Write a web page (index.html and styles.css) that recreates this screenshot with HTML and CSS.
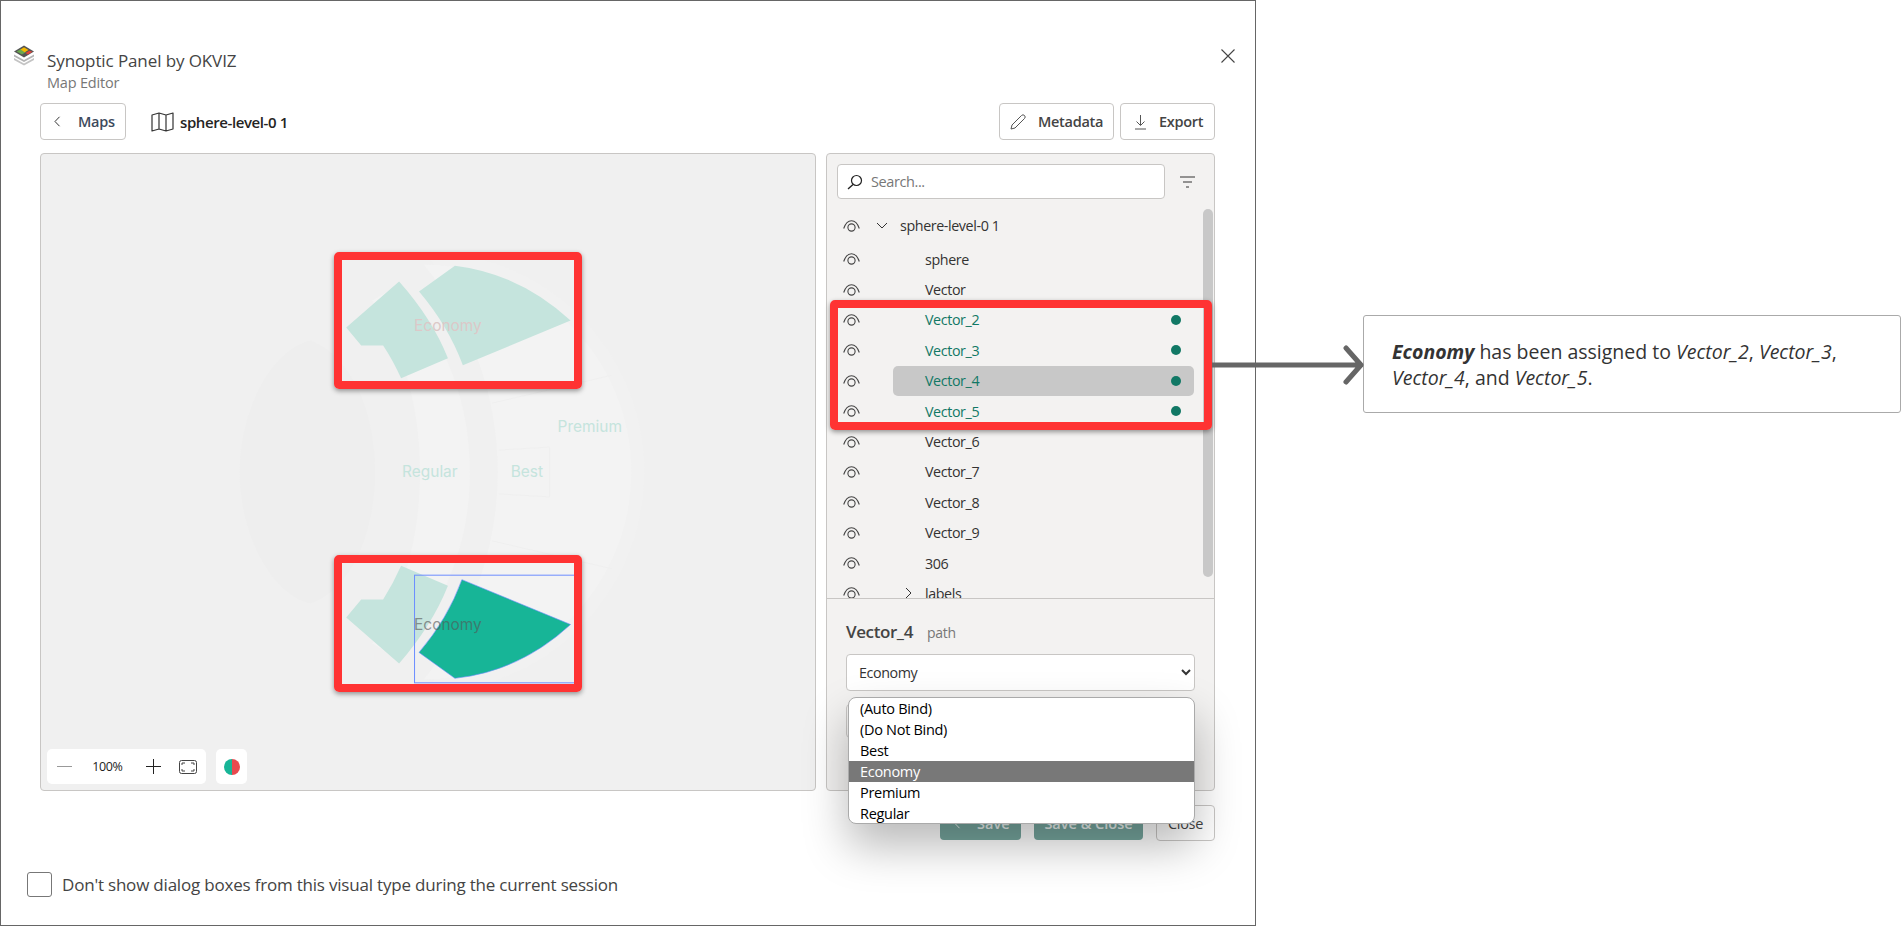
FILE: index.html
```html
<!DOCTYPE html>
<html lang="en">
<head>
<meta charset="utf-8">
<title>Synoptic Panel by OKVIZ</title>
<link rel="stylesheet" href="styles.css">
</head>
<body>
<svg class="defs" width="0" height="0">
	<symbol id="eye" viewBox="0 0 17 12">
		<path d="M.7 8.500C2.600 3 5.300.8 8.500.8s5.900 2.200 7.800 7.700" fill="none" stroke="#444" stroke-width="1.100"/>
		<circle cx="8.500" cy="7.500" r="3.600" fill="none" stroke="#444" stroke-width="1.100"/>
	</symbol>
</svg>

<div class="dialog">
	<header class="head">
		<svg class="logo" width="22" height="22" viewBox="0 0 22 22">
			<path d="M1 13l10 5.500L21 13v2l-10 5.500L1 15z" fill="#c4c4c4"/>
			<path d="M1 9.500l10 5.500 10-5.500v2L11 17 1 11.500z" fill="#b4b4b4"/>
			<path d="M11 .5l10 6-10 6-10-6z" fill="#555"/>
			<path d="M11 2l3 2-3 2-3-2z" fill="#4a4a4a"/>
			<path d="M3.500 6.500L8 4l5 3-4 2.500z" fill="#6aa84f"/>
			<path d="M7.500 4.500L11 2.300l4.500 2.700-3.800 2.300z" fill="#f5b800"/>
			<path d="M12.500 8l3.700-2.300 3.300 1L15 9.500z" fill="#e0433b"/>
		</svg>
		<div class="head-text">
			<div class="title">Synoptic Panel by OKVIZ</div>
			<div class="subtitle">Map Editor</div>
		</div>
		<svg class="close-x" width="14" height="14" viewBox="0 0 14 14"><path d="M.5.5l13 13M13.500.5l-13 13" stroke="#444" stroke-width="1.100"/></svg>
	</header>

	<div class="content">
		<div class="toolbar">
			<button class="btn btn-maps" type="button">
				<svg width="7" height="11" viewBox="0 0 7 11"><path d="M5.500.8L1 5.500l4.500 4.700" fill="none" stroke="#333" stroke-width="1"/></svg>
				<span>Maps</span>
			</button>
			<div class="map-name">
				<svg width="23" height="20" viewBox="0 0 23 20"><path d="M1 3l7-2 7 2 7-2v16l-7 2-7-2-7 2zM8 1v16M15 3v16" fill="none" stroke="#333" stroke-width="1.200" stroke-linejoin="round"/></svg>
				<span>sphere-level-0 1</span>
			</div>
			<div class="spacer"></div>
			<button class="btn btn-meta" type="button">
				<svg width="16" height="16" viewBox="0 0 16 16"><path d="M1 15l1-4L11.500 1.500a1.800 1.800 0 0 1 3 3L5 14z" fill="none" stroke="#555" stroke-width="1"/></svg>
				<span>Metadata</span>
			</button>
			<button class="btn btn-export" type="button">
				<svg width="13" height="16" viewBox="0 0 13 16"><path d="M6.500 1v10M2.500 7.500l4 4 4-4M1 15h11" fill="none" stroke="#555" stroke-width="1"/></svg>
				<span>Export</span>
			</button>
		</div>

		<div class="main">
			<div class="canvas">
				<svg class="drawing" viewBox="40 153 776 638" width="774" height="636">
					<path d="M424 251A221 221 0 0 1 424 693A330 330 0 0 0 498 472A330 330 0 0 0 424 251z" fill="#f1f1f1"/>
					<path d="M310 340C270 350 239 410 239 472S270 595 310 604C350 590 375 535 375 472S350 355 310 340z" fill="#eeeeee"/>
					<path d="M372 300C405 350 420 410 420 472S405 594 372 644L400 660C448 600 470 540 470 472S448 344 400 284z" fill="#f3f3f3"/>
					<path d="M424 264A208 208 0 0 1 424 680A330 330 0 0 0 498 472A330 330 0 0 0 424 264z" fill="#f3f3f3"/>
					<path d="M492 403L612 375M492 541L612 569M499 450L550 447L550 497L499 494" fill="none" stroke="#efefef" stroke-width="1"/>
					<path d="M346 327L399 281Q432 318 448 358L401 378Q393 360 383 345H361z" fill="#c5e4dd"/>
					<path d="M419 291L455 265Q520 273 571 320L463 365Q448 325 419 291z" fill="#c5e4dd"/>
					<path d="M346 618L399 664Q432 626 448 586L401 566Q393 584 383 600H361z" fill="#c5e4dd"/>
					<path d="M462 580L571 625Q520 672 455 679L419 653Q448 619 462 580z" fill="#17b597" stroke="#6b8cff" stroke-width=".6"/>
					<rect x="414.500" y="575.500" width="162" height="108" fill="none" stroke="#6b8cff" stroke-width="1"/>
					<text class="lbl lbl-soft" x="402" y="477">Regular</text>
					<text class="lbl lbl-soft" x="511" y="477">Best</text>
					<text class="lbl lbl-soft" x="558" y="432">Premium</text>
					<text class="lbl lbl-red" x="414" y="331">Economy</text>
					<text class="lbl lbl-dark" x="414" y="631">Economy</text>
				</svg>
				<div class="map-tools">
					<div class="zoom-box">
						<svg width="15" height="1" viewBox="0 0 15 1"><path d="M0 .5h15" stroke="#999"/></svg>
						<span class="pct">100%</span>
						<svg class="plus" width="15" height="15" viewBox="0 0 15 15"><path d="M0 7.500h15M7.500 0v15" stroke="#222"/></svg>
						<svg width="18" height="14" viewBox="0 0 18 14"><rect x=".5" y=".5" width="17" height="13" rx="2" fill="none" stroke="#444"/><path d="M3 5V3h3M12 3h3v2M15 9v2h-3M6 11H3V9" fill="none" stroke="#444"/></svg>
					</div>
					<div class="colour-box">
						<svg width="16" height="16" viewBox="0 0 16 16"><path d="M8 0a8 8 0 0 0 0 16z" fill="#17b597"/><path d="M8 0a8 8 0 0 1 0 16z" fill="#e8494f"/></svg>
					</div>
				</div>
			</div>

			<div class="panel">
				<div class="search-row">
					<label class="search">
						<svg width="16" height="16" viewBox="0 0 16 16"><circle cx="9.500" cy="6.500" r="5" fill="none" stroke="#222" stroke-width="1.200"/><path d="M6 10.500L1 15" stroke="#222" stroke-width="1.400"/></svg>
						<input type="text" placeholder="Search...">
					</label>
					<svg class="filter" width="15" height="12" viewBox="0 0 15 12"><path d="M0 1h15M3 6h9M6 11h3" stroke="#333" stroke-width="1"/></svg>
				</div>
				<div class="tree">
					<div class="row row-root"><svg class="eye"><use href="#eye"/></svg><svg class="twist" width="12" height="7" viewBox="0 0 12 7"><path d="M1 1l5 5 5-5" fill="none" stroke="#333"/></svg><span class="name">sphere-level-0 1</span></div>
					<div class="row"><svg class="eye"><use href="#eye"/></svg><span class="name name-in">sphere</span></div>
					<div class="row"><svg class="eye"><use href="#eye"/></svg><span class="name name-in">Vector</span></div>
					<div class="row bound"><svg class="eye"><use href="#eye"/></svg><span class="name name-in">Vector_2</span><i class="dot"></i></div>
					<div class="row bound"><svg class="eye"><use href="#eye"/></svg><span class="name name-in">Vector_3</span><i class="dot"></i></div>
					<div class="row bound selected"><svg class="eye"><use href="#eye"/></svg><span class="name name-in">Vector_4</span><i class="dot"></i></div>
					<div class="row bound"><svg class="eye"><use href="#eye"/></svg><span class="name name-in">Vector_5</span><i class="dot"></i></div>
					<div class="row"><svg class="eye"><use href="#eye"/></svg><span class="name name-in">Vector_6</span></div>
					<div class="row"><svg class="eye"><use href="#eye"/></svg><span class="name name-in">Vector_7</span></div>
					<div class="row"><svg class="eye"><use href="#eye"/></svg><span class="name name-in">Vector_8</span></div>
					<div class="row"><svg class="eye"><use href="#eye"/></svg><span class="name name-in">Vector_9</span></div>
					<div class="row"><svg class="eye"><use href="#eye"/></svg><span class="name name-in">306</span></div>
					<div class="row"><svg class="eye"><use href="#eye"/></svg><svg class="twist twist-labels" width="7" height="12" viewBox="0 0 7 12"><path d="M1 1l5 5-5 5" fill="none" stroke="#333"/></svg><span class="name name-labels">labels</span></div>
					<div class="scroll-thumb"></div>
				</div>
				<div class="details">
					<div class="sel-name"><b>Vector_4</b><span>path</span></div>
					<select class="bind"><option>Economy</option></select>
					<div class="ghost-field"></div>
					<ul class="options">
						<li>(Auto Bind)</li>
						<li>(Do Not Bind)</li>
						<li>Best</li>
						<li class="on">Economy</li>
						<li>Premium</li>
						<li>Regular</li>
					</ul>
				</div>
			</div>
		</div>

		<div class="actions">
			<button class="btn-solid btn-save" type="button">
				<svg width="7" height="11" viewBox="0 0 7 11"><path d="M5.500.8L1 5.500l4.500 4.700" fill="none" stroke="#e8f0ee" stroke-width="1"/></svg>
				<span>Save</span>
			</button>
			<button class="btn-solid btn-saveclose" type="button">Save &amp; Close</button>
			<button class="btn btn-close" type="button">Close</button>
		</div>
	</div>

	<label class="dont-show"><input type="checkbox"><span>Don't show dialog boxes from this visual type during the current session</span></label>
</div>

<aside class="note">
	<p><b><i>Economy</i></b> has been assigned to <i>Vector_2</i>, <i>Vector_3</i>, <i>Vector_4</i>, and <i>Vector_5</i>.</p>
</aside>

<!-- annotation marks drawn over the screenshot -->
<div class="mark mark-top"></div>
<div class="mark mark-bottom"></div>
<div class="mark mark-list"></div>
<svg class="arrow" width="152" height="40" viewBox="0 0 152 40"><path d="M0 20h149M134 3l15 17-15 17" fill="none" stroke="#666" stroke-width="5" stroke-linecap="round" stroke-linejoin="round"/></svg>
</body>
</html>
```

FILE: styles.css
```css
*{
	box-sizing:border-box;
}
body{
	margin:0;
	height:926px;
	display:flex;
	align-items:flex-start;
	position:relative;
	overflow:hidden;
	background:#fff;
	font-family:"Open Sans","Liberation Sans",sans-serif;
	color:#252423;
}
.defs{
	position:absolute;
}
button{
	font-family:inherit;
}
.dialog{
	width:1256px;
	height:926px;
	flex:none;
	border:1px solid #666;
	display:flex;
	flex-direction:column;
}
.head{
	display:flex;
	align-items:flex-start;
	height:102px;
	padding:44px 20px 0 12px;
}
.logo{
	flex:none;
}
.head-text{
	margin:5px 0 0 12px;
	flex:1;
}
.title{
	font-size:17px;
	line-height:22px;
	letter-spacing:-.1px;
	color:#444;
}
.subtitle{
	font-size:14.500px;
	line-height:20px;
	letter-spacing:-.2px;
	color:#777;
	margin-top:1px;
}
.close-x{
	margin-top:4px;
}
.content{
	padding:0 40px 0 39px;
}
.toolbar{
	display:flex;
	align-items:center;
	height:37px;
}
.spacer{
	flex:1;
}
.btn{
	height:37px;
	background:#fff;
	border:1px solid #c8c6c4;
	border-radius:4px;
	display:flex;
	align-items:center;
	font-size:14.500px;
	font-weight:600;
	letter-spacing:-.3px;
	color:#444;
	padding:0;
}
.btn-maps{
	width:86px;
	padding-left:13px;
	gap:17px;
	color:#3d4a5c;
}
.map-name{
	display:flex;
	align-items:center;
	margin-left:25px;
	gap:6px;
	font-size:15px;
	font-weight:600;
	letter-spacing:-.4px;
}
.btn-meta{
	width:115px;
	padding-left:10px;
	gap:12px;
	margin-right:6px;
}
.btn-export{
	width:95px;
	padding-left:13px;
	gap:12px;
}
.main{
	display:flex;
	gap:10px;
	height:638px;
	margin-top:13px;
}
.canvas{
	width:776px;
	flex:none;
	position:relative;
	background:#f0f0f0;
	border:1px solid #c8c6c4;
	border-radius:4px;
}
.drawing{
	display:block;
}
.lbl{
	font-family:Inter,Roboto,sans-serif;
	font-size:15.500px;
}
.lbl-soft{
	fill:#c5e4dd;
}
.lbl-red{
	fill:#dcc8c8;
}
.lbl-dark{
	fill:#555;
	opacity:.6;
}
.map-tools{
	position:absolute;
	left:6px;
	bottom:6px;
	display:flex;
	gap:10px;
}
.zoom-box,.colour-box{
	height:35px;
	background:#fff;
	border-radius:5px;
	display:flex;
	align-items:center;
}
.zoom-box{
	width:159px;
	padding:0 9px 0 10px;
	justify-content:space-between;
}
.pct{
	font-size:12.500px;
	letter-spacing:-.4px;
	color:#222;
	margin-left:2px;
}
.plus{
	margin-left:5px;
}
.colour-box{
	width:31px;
	justify-content:center;
}
.panel{
	flex:1;
	display:flex;
	flex-direction:column;
	background:#f3f2f1;
	border:1px solid #c8c6c4;
	border-radius:4px;
}
.search-row{
	display:flex;
	align-items:center;
	padding:10px 0 0 10px;
	height:45px;
	flex:none;
}
.search{
	width:328px;
	height:35px;
	display:flex;
	align-items:center;
	gap:6px;
	padding-left:9px;
	background:#fff;
	border:1px solid #c8c6c4;
	border-radius:4px;
}
.search input{
	border:0;
	outline:0;
	flex:1;
	min-width:0;
	background:none;
	font-family:inherit;
	font-size:14.500px;
	letter-spacing:-.4px;
}
.search input::placeholder{
	color:#777;
}
.filter{
	margin-left:15px;
}
.tree{
	flex:1;
	margin-top:8px;
	position:relative;
	overflow:hidden;
	min-height:0;
	border-bottom:1px solid #c8c6c4;
}
.row{
	height:30.400px;
	display:flex;
	align-items:center;
	position:relative;
	font-size:14.300px;
	letter-spacing:-.4px;
	color:#333;
}
.row-root{
	height:37px;
}
.eye{
	width:17px;
	height:12px;
	position:absolute;
	left:16px;
	top:50%;
	margin-top:-6px;
}
.twist{
	position:absolute;
	left:49px;
	top:50%;
	margin-top:-4px;
}
.twist-labels{
	left:78px;
	margin-top:-6px;
}
.name{
	margin-left:73px;
}
.name-in{
	margin-left:98px;
}
.name-labels{
	margin-left:98px;
}
.bound{
	color:#117865;
}
.selected::before{
	content:"";
	position:absolute;
	left:66px;
	right:20px;
	top:0;
	bottom:0;
	background:#c8c8c8;
	border-radius:5px;
}
.selected .name,.selected .dot{
	position:relative;
}
.dot{
	width:10px;
	height:10px;
	border-radius:50%;
	background:#117865;
	margin-left:auto;
	margin-right:33px;
}
.scroll-thumb{
	position:absolute;
	right:1px;
	top:2px;
	width:10px;
	height:368px;
	background:#c8c8c8;
	border-radius:5px;
}
.details{
	height:191px;
	flex:none;
	padding:20px 19px 0;
	position:relative;
}
.sel-name{
	display:flex;
	align-items:baseline;
	gap:14px;
	height:26px;
	margin-top:1px;
}
.sel-name b{
	font-size:17px;
	font-weight:600;
	letter-spacing:-.4px;
	color:#444;
}
.sel-name span{
	font-size:14px;
	color:#777;
	letter-spacing:-.3px;
}
.bind{
	display:block;
	width:349px;
	height:37px;
	margin-top:8px;
	padding-left:8px;
	background:#fff;
	border:1px solid #c8c6c4;
	border-radius:4px;
	font-family:inherit;
	font-size:14.300px;
	letter-spacing:-.4px;
	color:#333;
}
.ghost-field{
	width:349px;
	height:34px;
	margin-top:13px;
	border:1px solid #c8c6c4;
	border-radius:4px;
}
.options{
	position:absolute;
	left:21px;
	top:98px;
	width:347px;
	height:127px;
	margin:0;
	padding:0;
	list-style:none;
	overflow:hidden;
	background:#fff;
	border:1px solid #aaa;
	border-radius:8px;
	box-shadow:0 22px 45px rgba(0,0,0,.28);
	font-size:14.500px;
	letter-spacing:-.3px;
	color:#000;
	z-index:2;
}
.options li{
	height:21px;
	line-height:21px;
	padding-left:11px;
}
.options .on{
	background:#787878;
	color:#fff;
}
.actions{
	display:flex;
	justify-content:flex-end;
	align-items:center;
	gap:13px;
	height:36px;
	margin-top:14px;
}
.btn-solid{
	height:34px;
	background:#76a69e;
	color:#e8f0ee;
	border:0;
	border-radius:4px;
	font-size:14.500px;
	font-weight:600;
}
.btn-save{
	width:81px;
	display:flex;
	align-items:center;
	gap:16px;
	padding-left:14px;
}
.btn-saveclose{
	width:109px;
}
.btn-close{
	width:59px;
	height:36px;
	justify-content:center;
	font-weight:400;
}
.dont-show{
	display:flex;
	align-items:center;
	gap:10px;
	margin:31px 0 0 26px;
	font-size:17px;
	letter-spacing:-.2px;
	color:#444;
}
.dont-show input{
	appearance:none;
	width:25px;
	height:25px;
	margin:0;
	background:#fff;
	border:1px solid #777;
	border-radius:3px;
}
.note{
	width:538px;
	height:98px;
	flex:none;
	margin:315px 0 0 107px;
	padding:23px 18px 0 28px;
	border:1px solid #aaa;
	border-radius:3px;
}
.note p{
	margin:0;
	font-size:19.500px;
	line-height:26px;
	letter-spacing:0;
	color:#333;
}
.mark{
	position:absolute;
	border:8px solid #ff3333;
	border-radius:5px;
	box-shadow:0 2px 5px rgba(0,0,0,.4);
	z-index:3;
}
.mark-top{
	left:334px;
	top:252px;
	width:248px;
	height:137px;
}
.mark-bottom{
	left:334px;
	top:555px;
	width:248px;
	height:137px;
}
.mark-list{
	left:830px;
	top:300px;
	width:382px;
	height:130px;
}
.arrow{
	position:absolute;
	left:1212px;
	top:345px;
	z-index:3;
}
```
